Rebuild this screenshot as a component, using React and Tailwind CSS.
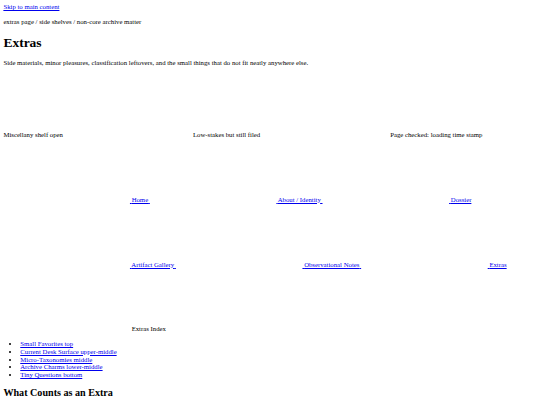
const Blank = () => (
  <svg className="inline align-baseline w-[126.5625px] h-[63.28px]" aria-hidden="true" />
);

const navLinks = ['Home', 'About / Identity', 'Dossier', 'Artifact Gallery', 'Observational Notes', 'Extras'];
const indexLinks = [
  'Small Favorites top',
  'Current Desk Surface upper-middle',
  'Micro-Taxonomies middle',
  'Archive Charms lower-middle',
  'Tiny Questions bottom',
];

export default function App() {
  return (
    <div className="p-[3.375px] font-['Liberation_Serif',serif] text-[6.75px] leading-[7.7px] text-black bg-white min-h-screen">
      <a href="#main" className="text-[#0000ee] underline">Skip to main content</a>

      <p className="my-[6.75px]">extras page / side shelves / non-core archive matter</p>

      <h1 className="text-[13.5px] font-bold my-[9.045px] leading-[15.5px]">Extras</h1>

      <p className="my-[6.75px]">
        Side materials, minor pleasures, classification leftovers, and the small things that do not fit neatly anywhere else.
      </p>

      {/* status strip */}
      <div>
        <span>Miscellany shelf open</span>{' '}
        <Blank />{' '}
        <span>Low-stakes but still filed</span>{' '}
        <Blank />{' '}
        <span>Page checked: loading time stamp</span>
      </div>

      {/* nav */}
      <div>
        {navLinks.map(l => (
          <span key={l}>
            <a href="#" className="text-[#0000ee] underline">
              <Blank />{' '}{l}{' '}
            </a>{' '}
          </span>
        ))}
      </div>

      <div>
        <Blank />{' '}Extras Index
      </div>
      <ul className="list-disc pl-[16.875px] my-[6.75px]">
        {indexLinks.map(l => (
          <li key={l}>
            <a href="#" className="text-[#0000ee] underline">{l}</a>
          </li>
        ))}
      </ul>

      <main id="main">
        <h2 className="text-[10.125px] font-bold my-[8.4px] leading-[11.6px]">What Counts as an Extra</h2>
      </main>
    </div>
  );
}
